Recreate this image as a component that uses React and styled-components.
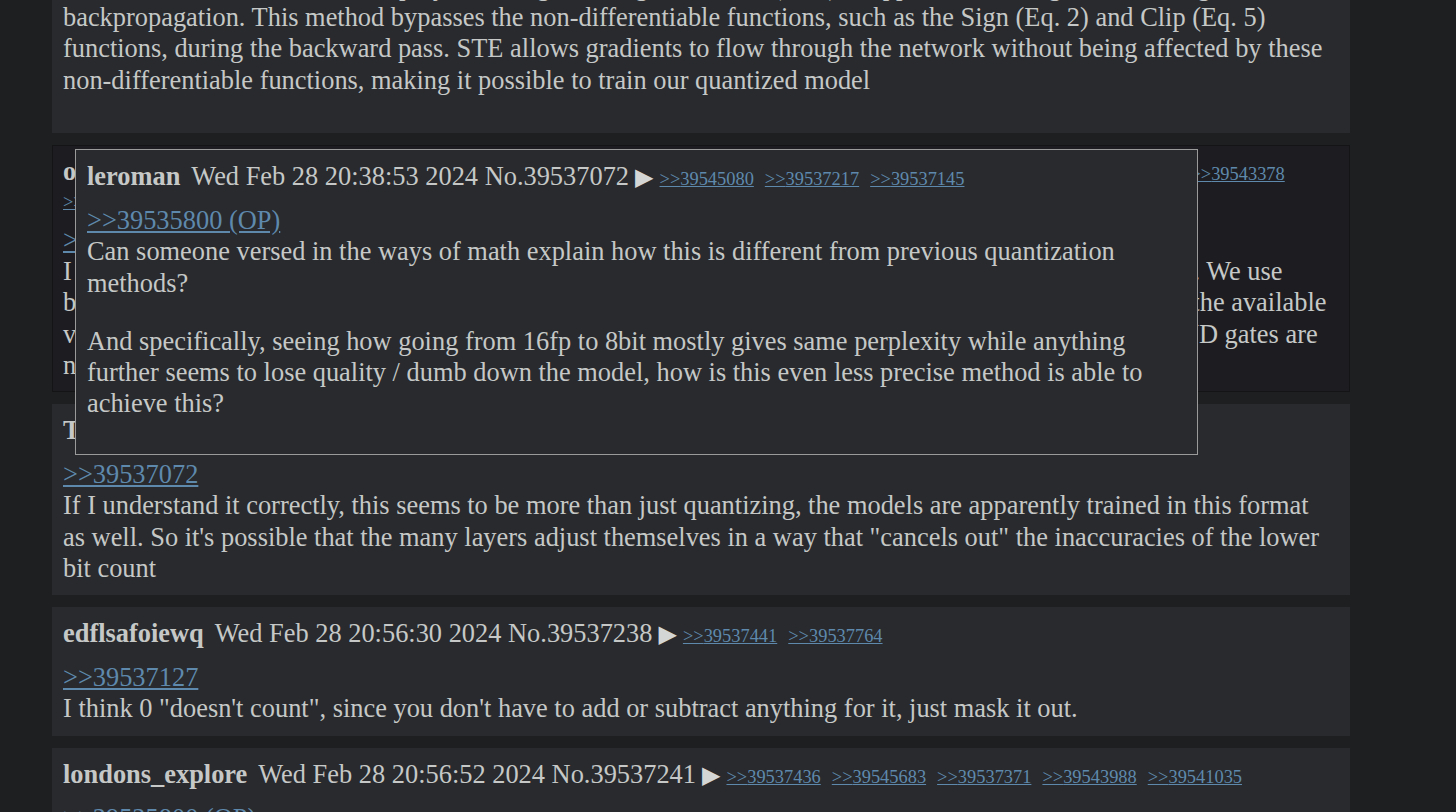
import styled, { createGlobalStyle } from "styled-components";

const GlobalStyle = createGlobalStyle`
html, body {
  margin: 0;
  padding: 0;
  background: #1d1f21;
  overflow: hidden;
}
body {
  font-family: "Liberation Serif", "Times New Roman", serif;
  font-size: 26.4px;
  line-height: 31.2px;
  color: #c5c8c6;
}
`

const Page = styled.div`
position: relative;
height: 812px;
overflow: hidden;
`

const Thread = styled.div`
display: flex;
flex-direction: column;
gap: 12px;
width: 1298px;
margin: -40px 0 0 52px;
`

const Post = styled.div`
box-sizing: border-box;
background: ${p => (p.$highlight ? "#1d1d21" : "#282a2e")};
border: ${p => (p.$highlight ? "1px solid #141416" : "none")};
padding: ${p => (p.$highlight ? "10px 14px 10px 10px" : "11px 15px 11px 11px")};
padding-bottom: ${p => (p.$trailing ? "37px" : undefined)};
`

const Popup = styled.div`
position: absolute;
left: 75px;
top: 149px;
width: 1123px;
box-sizing: border-box;
background: #282a2e;
border: 1px solid #9a9a9a;
padding: 11px 11px 35px;
`

const Header = styled.div`
display: flex;
flex-wrap: wrap;
align-items: baseline;
row-gap: 3px;
margin-bottom: 12px;
`

const Name = styled.span`
font-weight: bold;
margin-right: 11px;
`

const Stamp = styled.span`
white-space: nowrap;
`

const Arrow = styled.span`
font-family: "DejaVu Sans", sans-serif;
font-size: 24px;
margin: 0 6px;
color: #d4d6d5;
`

const BackLink = styled.a`
font-size: 18.4px;
line-height: 22px;
color: #5f89ac;
text-decoration: underline;
margin-right: 11px;
cursor: pointer;
`

const QuoteLine = styled.div`
a {
  color: #5f89ac;
  text-decoration: underline;
  cursor: pointer;
}
`

const Text = styled.div`
& + & {
  margin-top: 27px;
}
`

function PostHeader({ name, stamp, replies }) {
  return (
    <Header>
      <Name>{name}</Name>
      <Stamp>{stamp}</Stamp>
      <Arrow>▶</Arrow>
      {replies.map(r => (
        <BackLink key={r}>&gt;&gt;{r}</BackLink>
      ))}
    </Header>
  )
}

function Lines({ lines }) {
  return (
    <Text>
      {lines.map((l, i) => (
        <span key={i}>
          {l}
          {i < lines.length - 1 && <br />}
        </span>
      ))}
    </Text>
  )
}

const hiddenPost = {
  name: "oranjebird",
  stamp: "Wed Feb 28 20:47:20 2024 No.39537127",
  replies: ["39537238", "39537266", "39537301", "39537410", "39537598", "39543378", "39544012", "39545110"],
  quote: ">>39537072",
  lines: [
    "I remember reading the BitNet paper, it replaces the usual floating point multiplication with plain additions. We use",
    "binary or ternary weights so every multiply turns into an add, a subtract or a skip, which maps far better to the available",
    "vector units on current hardware, and in dedicated silicon only a handful of adders, XORs and plain old AND gates are",
    "needed instead of large floating point multipliers.",
  ],
}

const later = [
  {
    name: "edflsafoiewq",
    stamp: "Wed Feb 28 20:56:30 2024 No.39537238",
    replies: ["39537441", "39537764"],
    quote: ">>39537127",
    text: "I think 0 \"doesn't count\", since you don't have to add or subtract anything for it, just mask it out.",
  },
  {
    name: "londons_explore",
    stamp: "Wed Feb 28 20:56:52 2024 No.39537241",
    replies: ["39537436", "39545683", "39537371", "39543988", "39541035"],
    quote: ">>39535800 (OP)",
    text: "The interesting part is that hardware for this can be far simpler than anything built around multipliers.",
  },
]

export default function App() {
  return (
    <>
      <GlobalStyle />
      <Page>
        <Thread>
          <Post $trailing>
            <Lines
              lines={[
                "To train our 1-bit model, we employ the straight-through estimator (STE) to approximate the gradient during",
                "backpropagation. This method bypasses the non-differentiable functions, such as the Sign (Eq. 2) and Clip (Eq. 5)",
                "functions, during the backward pass. STE allows gradients to flow through the network without being affected by these",
                "non-differentiable functions, making it possible to train our quantized model",
              ]}
            />
          </Post>

          <Post $highlight>
            <PostHeader name={hiddenPost.name} stamp={hiddenPost.stamp} replies={hiddenPost.replies} />
            <QuoteLine>
              <a>{hiddenPost.quote}</a>
            </QuoteLine>
            <Lines lines={hiddenPost.lines} />
          </Post>

          <Post>
            <PostHeader name="Tesselator" stamp="Wed Feb 28 20:45:11 2024 No.39537145" replies={[]} />
            <QuoteLine>
              <a>&gt;&gt;39537072</a>
            </QuoteLine>
            <Text>
              If I understand it correctly, this seems to be more than just quantizing, the models are apparently trained in this format as well. So it's possible that the many layers adjust themselves in a way that "cancels out" the inaccuracies of the lower bit count
            </Text>
          </Post>

          {later.map(p => (
            <Post key={p.stamp}>
              <PostHeader name={p.name} stamp={p.stamp} replies={p.replies} />
              <QuoteLine>
                <a>{p.quote}</a>
              </QuoteLine>
              <Text>{p.text}</Text>
            </Post>
          ))}
        </Thread>

        <Popup>
          <PostHeader
            name="leroman"
            stamp="Wed Feb 28 20:38:53 2024 No.39537072"
            replies={["39545080", "39537217", "39537145"]}
          />
          <QuoteLine>
            <a>&gt;&gt;39535800 (OP)</a>
          </QuoteLine>
          <Text>
            Can someone versed in the ways of math explain how this is different from previous quantization methods?
          </Text>
          <Text>
            And specifically, seeing how going from 16fp to 8bit mostly gives same perplexity while anything further seems to lose quality / dumb down the model, how is this even less precise method is able to achieve this?
          </Text>
        </Popup>
      </Page>
    </>
  )
}
